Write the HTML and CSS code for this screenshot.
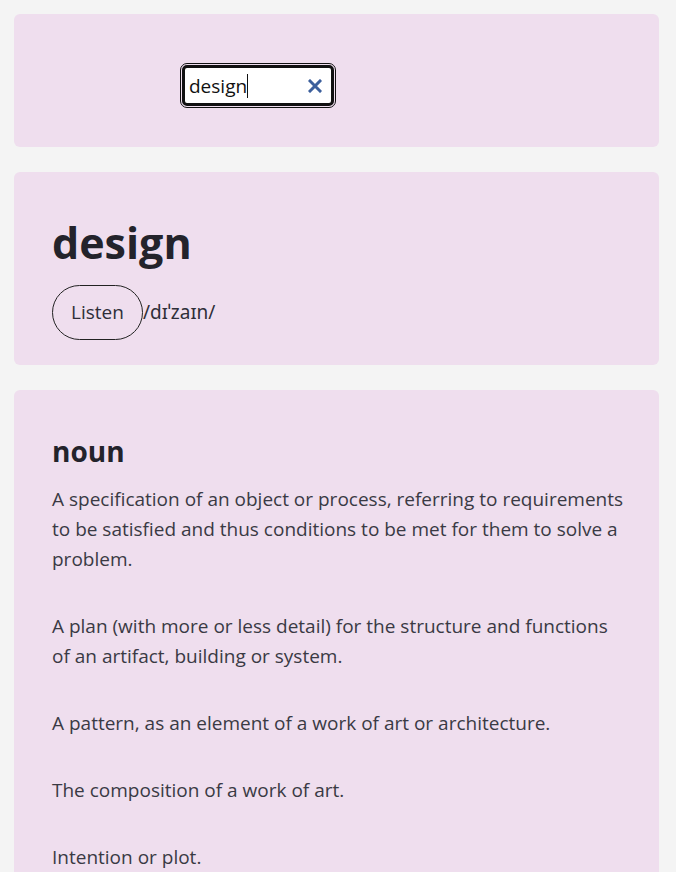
FILE: index.html
```html
<!DOCTYPE html>
<html lang="en">

<head>
	<meta charset="UTF-8">
	<meta name="viewport" content="width=device-width, initial-scale=1.0">
	<title>Dictionary</title>
	<link rel="stylesheet" href="styles.css">
</head>

<body>
	<div class="page">
		<!-- search -->
		<section class="card search-card">
			<div class="search">
				<span class="search-text">design</span><span class="caret"></span>
				<span class="clear">
					<svg width="14" height="14" viewBox="0 0 14 14">
						<path d="M2 2 L12 12 M12 2 L2 12" stroke="#3c5f9c" stroke-width="3" stroke-linecap="square" />
					</svg>
				</span>
			</div>
		</section>

		<!-- word -->
		<section class="card word-card">
			<h1 class="word">design</h1>
			<div class="phonetic">
				<button class="listen">Listen</button>
				<span class="ipa">/dɪˈzaɪn/</span>
			</div>
		</section>

		<!-- meanings -->
		<section class="card meaning-card">
			<h2 class="part">noun</h2>
			<p class="def">A specification of an object or process, referring to requirements to be satisfied and thus conditions to be met for them to solve a problem.</p>
			<p class="def">A plan (with more or less detail) for the structure and functions of an artifact, building or system.</p>
			<p class="def">A pattern, as an element of a work of art or architecture.</p>
			<p class="def">The composition of a work of art.</p>
			<p class="def">Intention or plot.</p>
		</section>
	</div>
</body>

</html>
```

FILE: styles.css
```css
body {
	margin: 0;
	padding: 0;
	background-color: #f4f4f4;
	font-family: "Open Sans", "Noto Sans", sans-serif;
	color: #2e2e38;
}

.page {
	padding: 14px 17px 0 14px;
	display: flex;
	flex-direction: column;
	gap: 25px;
}

.card {
	background-color: #efdeee;
	border-radius: 6px;
	padding: 0 38px;
}

/* search box */
.search-card {
	box-sizing: border-box;
	height: 133px;
	display: flex;
	align-items: center;
	padding-left: 168px;
	padding-top: 10px;
}

.search {
	box-sizing: border-box;
	width: 152px;
	height: 41px;
	background: white;
	border: 3px solid #111;
	border-radius: 5px;
	outline: 1px solid #111;
	outline-offset: 1px;
	display: flex;
	align-items: center;
	padding: 0 4px;
	font-size: 19px;
	color: #111;
}

.caret {
	width: 1px;
	height: 24px;
	background: #111;
}

.clear {
	margin-left: auto;
	margin-right: 5px;
	display: flex;
}

/* word */
.word-card {
	padding-top: 45px;
	padding-bottom: 25px;
}

.word {
	margin: 0;
	font-size: 43px;
	line-height: 1.2;
	font-weight: 700;
	color: #23232b;
}

.phonetic {
	margin-top: 16px;
	display: flex;
	align-items: center;
	font-size: 19px;
	color: #2e2e38;
}

.ipa {
	font-family: "Noto Sans", "DejaVu Sans", sans-serif;
}

.listen {
	height: 55px;
	width: 91px;
	border: 1px solid #222;
	border-radius: 28px;
	background: transparent;
	font-family: inherit;
	font-size: 19px;
	color: #2e2e38;
	padding: 0;
}

/* meanings */
.meaning-card {
	padding-top: 45px;
	padding-bottom: 20px;
	padding-right: 32px;
}

.part {
	margin: 0 0 16px;
	font-size: 28px;
	line-height: 1.2;
	font-weight: 700;
	color: #23232b;
}

.def {
	margin: 0 0 37px;
	font-size: 19px;
	line-height: 30px;
	color: #3a3a44;
}
```
